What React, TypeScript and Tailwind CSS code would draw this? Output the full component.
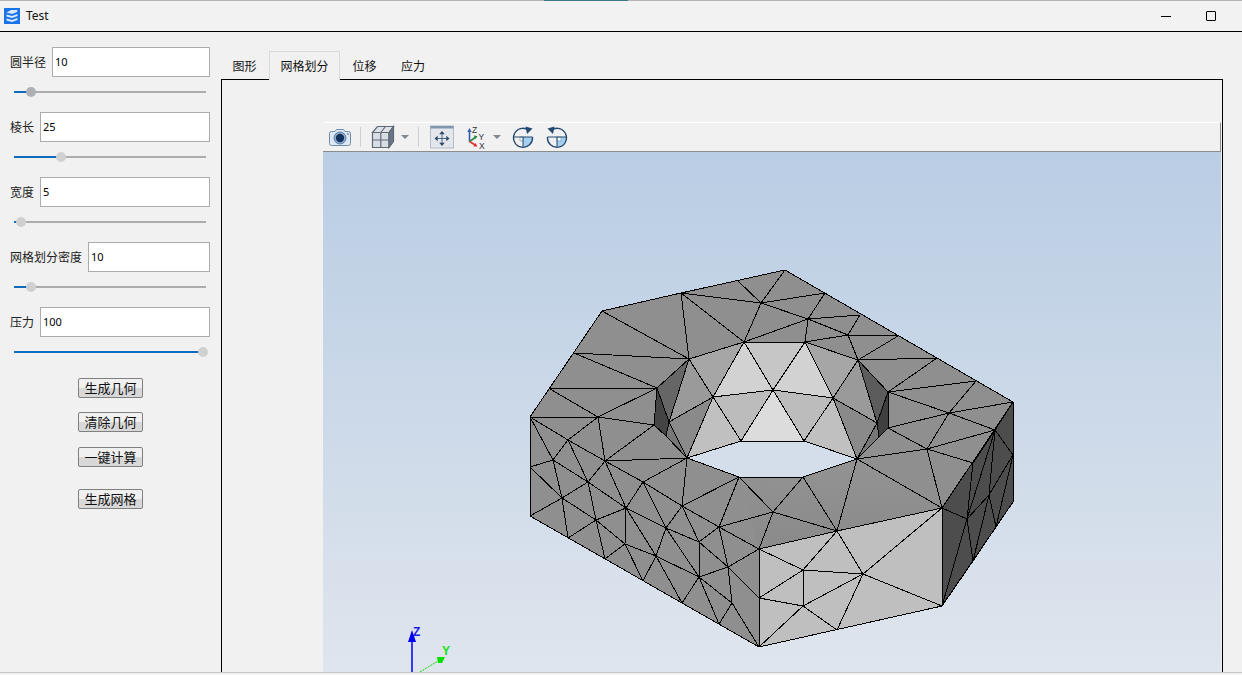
import React from 'react';

const fields = [
  { label: '圆半径', value: '10', thumb: 31, hover: true },
  { label: '棱长', value: '25', thumb: 61 },
  { label: '宽度', value: '5', thumb: 21 },
  { label: '网格划分密度', value: '10', thumb: 31 },
  { label: '压力', value: '100', thumb: 203 },
];

type P = [number, number];

// mesh nodes, in page coordinates
const n = {
  a: [530, 417], b: [602, 311], c: [681, 293], top: [785, 270], rt: [1013, 402], fr: [942, 508],
  l1: [550, 389], l2: [574, 353], h1: [689, 359], h2: [657, 388], h3: [654, 425], h4: [669, 422], h5: [666, 436],
  m1: [598, 417], m2: [568, 440], t1: [738, 281], t2: [761, 303], t3: [808, 319], i1: [744, 342], i2: [805, 342],
  i3: [773, 390], i4: [713, 397], i5: [833, 398], i6: [741, 441], i7: [804, 441], e1: [687, 458], e2: [857, 459],
  r1: [858, 360], r2: [877, 423], r3: [888, 392], r4: [888, 428], r5: [879, 437],
  o1: [825, 293], o2: [860, 315], o3: [898, 336], o4: [937, 358], o5: [976, 381], s1: [848, 335], s2: [949, 413], s3: [995, 430], s4: [927, 449],
  p0: [530, 516], p1: [553, 460], p2: [605, 461], p4: [530, 467], p5: [588, 482], p6: [643, 482], p7: [739, 477],
  p8: [562, 498], p9: [626, 508], p10: [682, 506], p11: [773, 512], p12: [596, 520], p13: [666, 528], p14: [719, 527],
  p15: [699, 542], p16: [625, 544], p17: [759, 549], p18: [568, 538], p19: [605, 559], p20: [656, 556], p21: [728, 567],
  p22: [643, 581], p23: [699, 577], p24: [759, 598], p25: [732, 603], p26: [682, 603], p27: [719, 624], p28: [759, 647],
  q1: [803, 570], q2: [863, 574], q3: [803, 606], q4: [837, 630], q5: [837, 531], q7: [803, 477], q10: [942, 606],
  d1: [967, 519], d2: [989, 495], d3: [973, 561], d4: [996, 527], d5: [1013, 455], d6: [973, 463], d7: [1013, 502],
} as Record<string, P>;

const edges =
  'b-h1 c-h1 l2-h1 l2-h2 l1-h2 l1-m1 a-m1 m1-h2 m1-h3 h2-h3 h3-p2 m1-p2 m1-m2 a-m2 m2-p2 a-p1 m2-p1 m2-p5 ' +
  'c-i1 c-t2 h1-i1 h1-i4 t1-t2 t2-i1 i1-t3 t2-top t2-o1 t2-t3 t3-i2 t3-o1 t3-o2 t3-s1 i2-s1 s1-o2 s1-o3 s1-r1 i2-r1 ' +
  'r1-o3 r1-o4 r1-r3 r3-o4 r3-o5 r3-s2 o5-s2 s2-rt s2-s3 rt-s3 r4-s2 r4-s4 s2-s4 s4-s3 e2-s4 r4-e2 r3-r4 s4-fr s4-d6 ' +
  'p4-p1 p1-p5 p5-p2 p1-p8 p4-p8 p0-p8 p8-p5 p8-p12 p8-p18 p5-p12 p12-p18 p12-p9 p12-p16 p12-p19 p16-p19 p5-p9 p2-p9 p2-p6 p2-e1 ' +
  'e1-p6 e1-p10 p6-p10 p6-p9 p6-p13 p9-p16 p9-p13 p9-p20 p16-p20 p16-p22 p20-p22 p20-p13 p20-p26 p20-p23 p13-p10 p13-p15 p13-p23 ' +
  'p10-p15 p10-p14 p10-p7 p7-p14 p7-p11 e1-p7 p14-p11 p14-p17 p11-p17 p14-p15 p14-p21 p15-p23 p15-p21 p23-p21 p23-p26 p23-p27 p23-p25 ' +
  'p21-p17 p21-p25 p21-p24 p17-p24 p25-p27 p25-p28 p24-p28 ' +
  'q5-q1 q5-q2 q2-fr q1-q2 q1-q3 q2-q3 q2-q4 q2-q10 q3-q4 q1-p17 q1-p24 p24-q3 q3-p28 p11-q5 p17-q5 q5-fr q7-q5 q7-p11 e2-q5 e2-fr q7-e2 p7-q7 ' +
  'fr-q10 q10-p28 p28-p0 p0-a a-b b-c c-top top-rt rt-fr rt-d7 d7-q10 ' +
  'fr-d1 q10-d1 q10-d3 d1-d3 d1-d6 d1-d2 d2-d3 d2-d4 d2-d5 s3-d1 s3-d2 s3-d6 s3-d5 d5-d4 d4-d7 d3-d4';

const facets: [string, string][] = [
  ['h1 i4 h4', '#9a9a9a'], ['h4 i4 e1', '#8a8a8a'], ['i4 i6 e1', '#c0c0c0'], ['i4 i1 h1', '#a6a6a6'],
  ['i1 i2 i3', '#c6c6c6'], ['i1 i3 i4', '#d2d2d2'], ['i2 i3 i5', '#d2d2d2'], ['i4 i3 i6', '#bcbcbc'],
  ['i3 i5 i7', '#bcbcbc'], ['i3 i6 i7', '#dcdcdc'], ['i5 i7 e2', '#c0c0c0'], ['i5 e2 r2', '#8a8a8a'],
  ['i5 r1 r2', '#9a9a9a'], ['i2 r1 i5', '#a6a6a6'], ['h2 h1 h4', '#666666'], ['h2 h4 h5 h3', '#444444'],
  ['h4 h5 e1', '#777777'], ['r1 r2 r3', '#5c5c5c'], ['r3 r2 r5 r4', '#3f3f3f'], ['r2 r5 e2', '#777777'],
];

const pts = (names: string) => names.split(' ').map((k) => n[k].join(',')).join(' ');

function Mesh() {
  return (
    <svg className="block w-full h-full" viewBox="323 152 898 520">
      <defs>
        <linearGradient id="band" x1="0" y1="0" x2="0" y2="1">
          <stop offset="0" stopColor="#939393" />
          <stop offset="1" stopColor="#8a8a8a" />
        </linearGradient>
      </defs>
      <polygon points={pts('a b c top rt fr p17 p28 p0')} fill="#8f8f8f" />
      <polygon points={pts('p7 q7 e2 fr p17')} fill="url(#band)" />
      <polygon points={pts('e1 i6 i7 e2 q7 p7')} fill="#d3deea" />
      {facets.map(([f, fill]) => (
        <polygon key={f} points={pts(f)} fill={fill} />
      ))}
      <polygon points={pts('p17 fr q10 p28')} fill="#bfbfbf" />
      <polygon points={pts('fr rt d7 q10')} fill="#4d4d4d" />
      <g stroke="#000" strokeWidth="1" shapeRendering="crispEdges" fill="none">
        {facets.map(([f]) => (
          <polygon key={f} points={pts(f)} />
        ))}
        {edges.split(' ').map((e) => {
          const [s, t] = e.split('-');
          return <line key={e} x1={n[s][0]} y1={n[s][1]} x2={n[t][0]} y2={n[t][1]} />;
        })}
      </g>
      {/* axes marker */}
      <g>
        <line x1="412" y1="672" x2="412" y2="640" stroke="#0000f0" strokeWidth="1.5" />
        <polygon points="412,630 416,642 408,642" fill="#0000f0" />
        <text x="413" y="636" fill="#1a1ae6" fontSize="12" fontWeight="700" fontFamily="'Liberation Sans', sans-serif">Z</text>
        <line x1="420" y1="672" x2="438" y2="661" stroke="#00e000" strokeWidth="1" strokeDasharray="2 1" />
        <polygon points="445,657 437,657 438,663 442,663" fill="#00e000" />
        <text x="442" y="655" fill="#20e020" fontSize="12" fontWeight="700" fontFamily="'Liberation Sans', sans-serif">Y</text>
      </g>
    </svg>
  );
}

function CameraIcon() {
  return (
    <svg width="24" height="20" viewBox="0 0 24 20">
      <path d="M1.5 6.5 a2 2 0 0 1 2-2 H7 l1.5-2 h7 l1.5 2 h3.5 a2 2 0 0 1 2 2 v10 a2 2 0 0 1-2 2 h-17 a2 2 0 0 1-2-2 z" fill="#dfe8f2" stroke="#6f8cab" />
      <circle cx="12" cy="11" r="6" fill="#8fb0d0" stroke="#5b7fa8" />
      <circle cx="12" cy="11" r="4.2" fill="#16325c" />
      <circle cx="20" cy="7" r="0.8" fill="#456" />
    </svg>
  );
}

function BoxIcon() {
  return (
    <svg width="24" height="24" viewBox="0 0 24 24" fill="#d9dee4" stroke="#5f6975" strokeWidth="1.2">
      <path d="M1.5 7.5 L6.5 1.5 H22.5 L18 7.5 Z" fill="#dfe3e8" />
      <path d="M1.5 7.5 H18 V22.5 H1.5 Z" />
      <path d="M18 7.5 L22.5 1.5 V16.5 L18 22.5 Z" fill="#68768a" />
      <path d="M9.8 7.5 V22.5 M1.5 15 H18 M14.5 1.5 L9.8 7.5" fill="none" />
    </svg>
  );
}

function FitIcon() {
  return (
    <svg width="24" height="24" viewBox="0 0 24 24">
      <rect x="0.5" y="1" width="23" height="22" fill="#e3e6ec" stroke="#b4bcc8" />
      <rect x="0.5" y="1" width="23" height="2.5" fill="#8296b0" />
      <g fill="#2f4a68" stroke="#2f4a68">
        <path d="M12 8 V19 M6.5 13.5 H17.5" strokeWidth="0.8" />
        <path d="M12 6 l-2.8 3.2 h5.6 z M12 21 l-2.8-3.2 h5.6 z M4.5 13.5 l3.2-2.8 v5.6 z M19.5 13.5 l-3.2-2.8 v5.6 z" stroke="none" />
      </g>
    </svg>
  );
}

function AxesIcon() {
  return (
    <svg width="20" height="24" viewBox="0 0 20 24">
      <path d="M2.5 6 V16.5" stroke="#2f5fb0" strokeWidth="1.6" />
      <path d="M2.5 3 l-2.2 4 h4.4 z" fill="#2f5fb0" />
      <path d="M2.5 16.5 L9 12" stroke="#2a8a4a" strokeWidth="1.6" />
      <path d="M10.5 11 l-4-0.5 2 3.5 z" fill="#2a8a4a" />
      <path d="M2.5 16.5 L9 20.5" stroke="#e03030" strokeWidth="1.6" />
      <path d="M10.5 21.5 l-4.2 0 2-3.4 z" fill="#e03030" />
      <text x="5" y="8" fontSize="8.5" fill="#333" fontFamily="'Liberation Sans', sans-serif">Z</text>
      <text x="11.5" y="14.5" fontSize="8.5" fill="#333" fontFamily="'Liberation Sans', sans-serif">Y</text>
      <text x="12" y="23.5" fontSize="8.5" fill="#333" fontFamily="'Liberation Sans', sans-serif">X</text>
    </svg>
  );
}

function RotateIcon({ back }: { back?: boolean }) {
  return (
    <svg width="22" height="22" viewBox="0 0 22 22">
      <path d="M11 11 H20.5 A9.5 9.5 0 0 1 11 20.5 Z" fill="#a5d0f0" />
      {back ? (
        <rect x="11" y="11" width="4" height="4" fill="#f6fafd" stroke="#6f93b5" strokeWidth="0.6" />
      ) : (
        <rect x="8" y="11" width="3.5" height="4" fill="#f6fafd" stroke="#6f93b5" strokeWidth="0.6" />
      )}
      <path d="M1.5 11 H20.5 M11 11 V20.5" fill="none" stroke="#25486f" strokeWidth="1" />
      <g transform={back ? 'matrix(-1 0 0 1 22 0)' : undefined} fill="#25486f">
        <path d="M16.5 4 A9.5 9.5 0 1 0 20.5 11" fill="none" stroke="#25486f" strokeWidth="1.4" />
        <path d="M13.5 0.5 L20.5 2.5 L15 8 Z" />
      </g>
    </svg>
  );
}

function Caret() {
  return <div className="w-0 h-0 border-x-[4px] border-x-transparent border-t-[4px] border-t-[#808890]" />;
}

function Slider({ thumb, hover }: { thumb: number; hover?: boolean }) {
  // thumb is the page x of the handle, track starts at x=14
  const left = thumb - 14;
  return (
    <div className="relative h-[35px] w-[192px] ml-[4px]">
      <div className="absolute left-0 right-0 top-[14px] h-[2px] bg-[#acacac]" />
      <div className="absolute left-0 top-[14px] h-[2px] bg-[#0f6cbd]" style={{ width: left }} />
      <div
        className={`absolute top-[10px] w-[10px] h-[10px] rounded-full ${hover ? 'bg-[#adb1b5]' : 'bg-[#d0d0d0]'}`}
        style={{ left: left - 5 }}
      />
    </div>
  );
}

function Btn({ text, className }: { text: string; className: string }) {
  return (
    <button className={`block w-[65px] h-[20px] ml-[68px] border border-[#808080] rounded-[2px] bg-[linear-gradient(#f0f0f0_50%,#d8d8d8_50%)] text-[13px] leading-[17px] text-[#111] ${className}`}>
      {text}
    </button>
  );
}

export default function App() {
  return (
    <div className="w-[1242px] h-[675px] overflow-hidden flex flex-col bg-[#f1f1f1] text-[#111] font-['Noto_Sans','Noto_Sans_CJK_SC',sans-serif] text-[12px]">
      {/* title bar */}
      <div className="relative h-[32px] shrink-0 flex items-center border-t border-t-[#b4b4b4] border-b border-b-black pl-[4px] bg-[#f2f2f2]">
        <div className="absolute top-[-1px] left-[544px] w-[84px] h-[1px] bg-[#3a7a80]" />
        <svg width="16" height="16" viewBox="0 0 16 16" className="mr-[6px]">
          <rect width="16" height="16" fill="#1a73e8" />
          <path d="M2.5 4.5 L7 2 H13.5 L13 4 L8 6 Z M2.5 6.5 L8 8 L13.5 6 V8 L8 10 L2.5 8.5 Z M2.5 10.5 L8 12 L13.5 10 V12 L8 14 L2.5 12.5 Z" fill="#dcebfb" />
        </svg>
        <span className="text-[12px]">Test</span>
        <div className="ml-auto flex items-center pr-[26px]">
          <div className="w-[10px] h-[1px] bg-black mr-[35px]" />
          <div className="w-[10px] h-[10px] border border-black rounded-[1px]" />
        </div>
      </div>

      <div className="flex-1 flex min-h-0">
        {/* left parameter panel */}
        <div className="w-[221px] shrink-0 pl-[10px] pt-[15px]">
          {fields.map((f) => (
            <div key={f.label}>
              <div className="flex items-center gap-[6px] w-[200px] h-[30px]">
                <span className="whitespace-nowrap text-[#222] pt-[1px]">{f.label}</span>
                <div className="flex-1 h-[30px] bg-white border border-[#acacac] flex items-center pl-[2px] pt-[1px] text-[11px] text-black">{f.value}</div>
              </div>
              <Slider thumb={f.thumb} hover={f.hover} />
            </div>
          ))}
          <Btn text="生成几何" className="mt-[6px]" />
          <Btn text="清除几何" className="mt-[14px]" />
          <Btn text="一键计算" className="mt-[15px]" />
          <Btn text="生成网格" className="mt-[22px]" />
        </div>

        {/* tabs and view */}
        <div className="flex-1 min-w-0 flex flex-col pr-[19px]">
          <div className="h-[48px] shrink-0 flex items-end -mb-[1px] relative z-10">
            <div className="w-[48px] h-[27px] pr-[1px] flex items-center justify-center">图形</div>
            <div className="w-[71px] h-[29px] pt-[1px] flex items-center justify-center border border-[#d9d9d9] border-b-0 bg-[#f1f1f1]">网格划分</div>
            <div className="w-[49px] h-[27px] flex items-center justify-center">位移</div>
            <div className="w-[48px] h-[27px] flex items-center justify-center">应力</div>
          </div>
          <div className="flex-1 min-h-0 border-x border-t border-black pt-[42px] pl-[101px] pr-[1px] flex flex-col">
            <div className="h-[30px] shrink-0 bg-[#f1f1f1] border-t border-t-white border-b border-b-[#8c8c8c] border-r border-r-[#8c8c8c] flex items-center pl-[5px]">
              <CameraIcon />
              <div className="w-px h-[20px] bg-[#cfcfcf] ml-[8px] mr-[10px]" />
              <BoxIcon />
              <div className="ml-[6px] mr-[9px]"><Caret /></div>
              <div className="w-px h-[20px] bg-[#cfcfcf] mr-[11px]" />
              <FitIcon />
              <div className="ml-[13px] mr-[6px]"><AxesIcon /></div>
              <Caret />
              <div className="ml-[11px]"><RotateIcon /></div>
              <div className="ml-[12px]"><RotateIcon back /></div>
            </div>
            <div className="flex-1 min-h-0 bg-[linear-gradient(#b9cde4,#dfe5ed)]">
              <Mesh />
            </div>
          </div>
        </div>
      </div>
      <div className="h-[3px] shrink-0 border-t border-t-[#c8c8c8] bg-[#f1f1f1]" />
    </div>
  );
}
